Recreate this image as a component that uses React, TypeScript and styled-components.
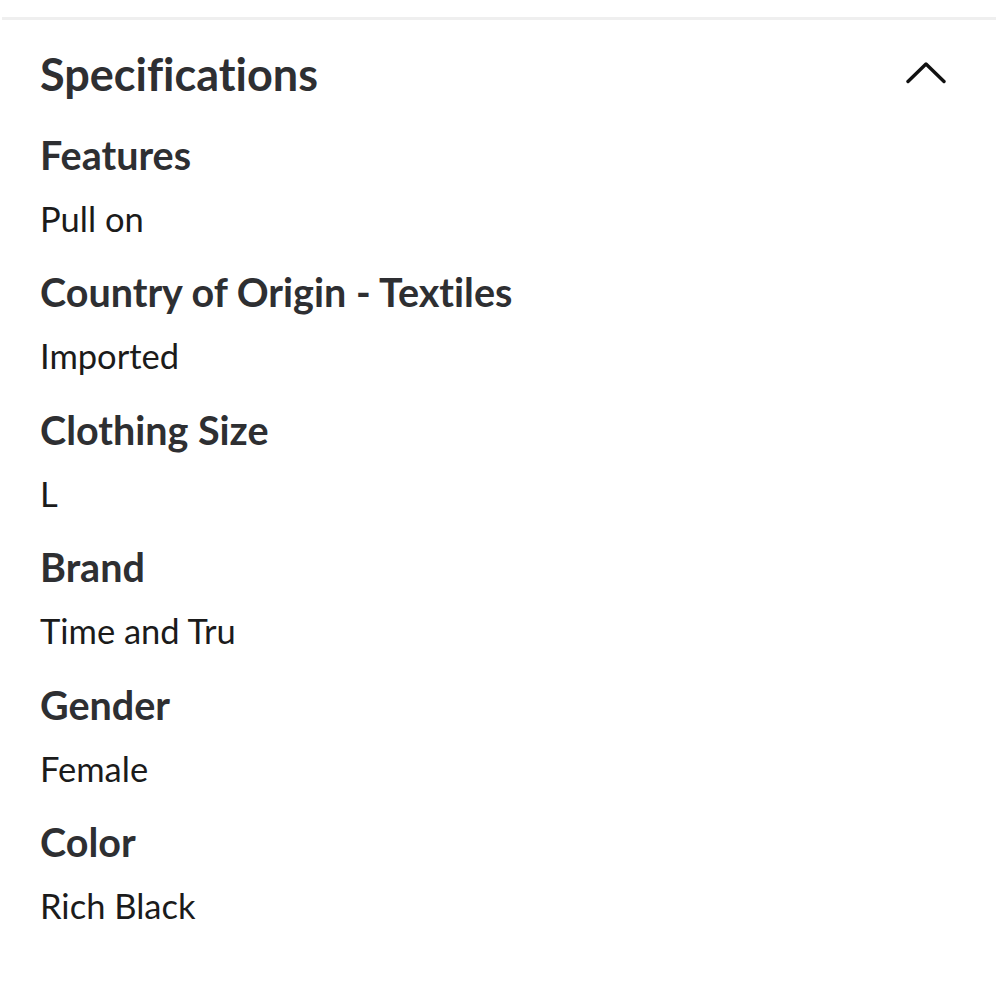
import React from "react";
import styled, { createGlobalStyle } from "styled-components";

const Global = createGlobalStyle`
  html, body { margin: 0; padding: 0; background: #ffffff; }
  body {
    font-family: Lato, "Open Sans", sans-serif;
    font-variant-ligatures: none;
    font-feature-settings: "liga" 0, "clig" 0;
  }
`;

const Page = styled.div`
  width: 1000px;
  height: 1000px;
  background: #ffffff;
  overflow: hidden;
`;

const Divider = styled.div`
  margin: 17px 4px 0 2px;
  height: 3px;
  background: #efefef;
`;

const Section = styled.section`
  padding: 0 40px;
`;

const Header = styled.div`
  display: flex;
  align-items: center;
  justify-content: space-between;
  height: 107px;
`;

const Title = styled.h2`
  margin: 0;
  font-size: 45px;
  line-height: 54px;
  font-weight: 700;
  color: #2e2f32;
`;

const ToggleButton = styled.button`
  border: 0;
  background: none;
  padding: 0;
  margin-right: 13px;
  width: 42px;
  height: 24px;
  display: flex;
  align-items: center;
  justify-content: center;
  cursor: pointer;
`;

const List = styled.dl`
  margin: 0;
  display: flex;
  flex-direction: column;
`;

const Item = styled.div`
  display: flex;
  flex-direction: column;
  height: 137.4px;
  flex-shrink: 0;
`;

const Label = styled.dt`
  font-size: 39.5px;
  font-weight: 700;
  color: #2e2f32;
  line-height: 48px;
  margin-top: 4px;
  white-space: nowrap;
`;

const Value = styled.dd`
  margin: 18px 0 0;
  font-size: 34.5px;
  font-weight: 400;
  color: #1b1b1b;
  line-height: 44px;
  white-space: nowrap;
`;

const specs = [
  ["Features", "Pull on"],
  ["Country of Origin - Textiles", "Imported"],
  ["Clothing Size", "L"],
  ["Brand", "Time and Tru"],
  ["Gender", "Female"],
  ["Color", "Rich Black"],
];

export default function App() {
  return (
    <Page>
      <Global />
      <Divider />
      <Section>
        <Header>
          <Title>Specifications</Title>
          <ToggleButton aria-label="Collapse">
            <svg width="42" height="24" viewBox="0 0 42 24">
              <path
                d="M3 19.5 L21 2 L39 19.5"
                fill="none"
                stroke="#111"
                strokeWidth="3.4"
                strokeLinecap="round"
                strokeLinejoin="round"
              />
            </svg>
          </ToggleButton>
        </Header>
        <List>
          {specs.map(([k, v]) => (
            <Item key={k}>
              <Label>{k}</Label>
              <Value>{v}</Value>
            </Item>
          ))}
        </List>
      </Section>
    </Page>
  );
}
